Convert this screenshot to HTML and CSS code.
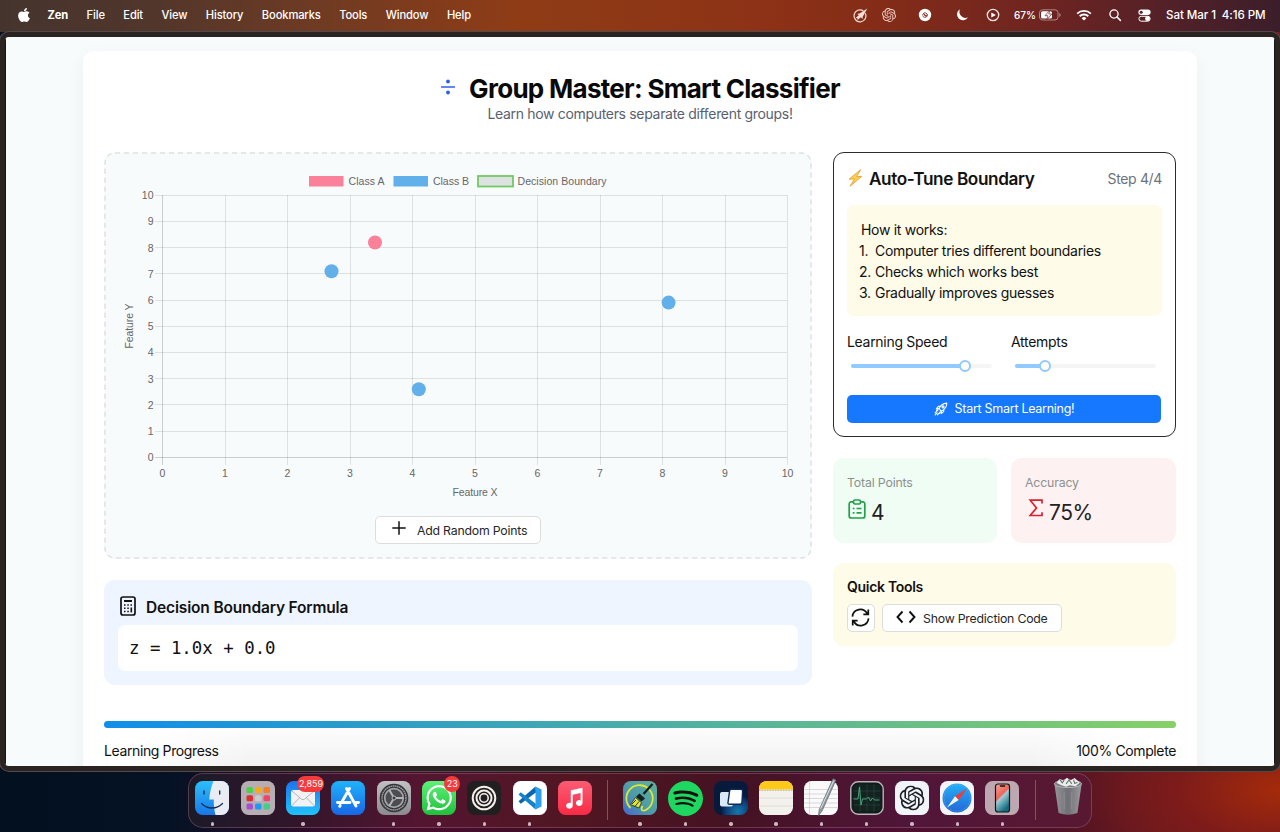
FILE: index.html
```html
<!DOCTYPE html>
<html lang="en">
<head>
<meta charset="utf-8">
<title>Group Master: Smart Classifier</title>
<link rel="stylesheet" href="styles.css">
</head>
<body>
<svg class="defs" width="0" height="0" aria-hidden="true">
  <symbol id="knot" viewBox="0 0 24 24"><path d="M22.2819 9.8211a5.9847 5.9847 0 0 0-.5157-4.9108 6.0462 6.0462 0 0 0-6.5098-2.9A6.0651 6.0651 0 0 0 4.9807 4.1818a5.9847 5.9847 0 0 0-3.9977 2.9 6.0462 6.0462 0 0 0 .7427 7.0966 5.98 5.98 0 0 0 .511 4.9107 6.051 6.051 0 0 0 6.5146 2.9001A5.9847 5.9847 0 0 0 13.2599 24a6.0557 6.0557 0 0 0 5.7718-4.2058 5.9894 5.9894 0 0 0 3.9977-2.9001 6.0557 6.0557 0 0 0-.7475-7.0729zm-9.022 12.6081a4.4755 4.4755 0 0 1-2.8764-1.0408l.1419-.0804 4.7783-2.7582a.7948.7948 0 0 0 .3927-.6813v-6.7369l2.02 1.1686a.071.071 0 0 1 .038.052v5.5826a4.504 4.504 0 0 1-4.4945 4.4944zm-9.6607-4.1254a4.4708 4.4708 0 0 1-.5346-3.0137l.142.0852 4.783 2.7582a.7712.7712 0 0 0 .7806 0l5.8428-3.3685v2.3324a.0804.0804 0 0 1-.0332.0615L9.74 19.9502a4.4992 4.4992 0 0 1-6.1408-1.6464zM2.3408 7.8956a4.485 4.485 0 0 1 2.3655-1.9728V11.6a.7664.7664 0 0 0 .3879.6765l5.8144 3.3543-2.0201 1.1685a.0757.0757 0 0 1-.071 0l-4.8303-2.7865A4.504 4.504 0 0 1 2.3408 7.8956zm16.5963 3.8558L13.1038 8.364 15.1192 7.2a.0757.0757 0 0 1 .071 0l4.8303 2.7913a4.4944 4.4944 0 0 1-.6765 8.1042v-5.6772a.79.79 0 0 0-.407-.667zm2.0107-3.0231l-.142-.0852-4.7735-2.7818a.7759.7759 0 0 0-.7854 0L9.409 9.2297V6.8974a.0662.0662 0 0 1 .0284-.0615l4.8303-2.7866a4.4992 4.4992 0 0 1 6.6802 4.66zM8.3065 12.863l-2.02-1.1638a.0804.0804 0 0 1-.038-.0567V6.0742a4.4992 4.4992 0 0 1 7.3757-3.4537l-.142.0805L8.704 5.459a.7948.7948 0 0 0-.3927.6813zm1.0976-2.3654l2.602-1.4998 2.6069 1.4998v2.9994l-2.5974 1.4997-2.6067-1.4997Z"/></symbol>
</svg>

<header class="menubar">
  <nav class="menus">
    <svg class="apple" viewBox="0 0 384 512"><path fill="#fff" d="M318.7 268.7c-.2-36.7 16.4-64.4 50-84.8-18.8-26.9-47.2-41.7-84.7-44.6-35.5-2.8-74.3 20.7-88.5 20.7-15 0-49.4-19.7-76.4-19.7C63.3 141.2 4 184.8 4 273.5q0 39.3 14.4 81.2c12.8 36.7 59 126.7 107.2 125.2 25.2-.6 43-17.9 75.8-17.9 31.8 0 48.3 17.9 76.4 17.9 48.6-.7 90.4-82.5 102.6-119.3-65.2-30.7-61.7-90-61.7-91.9zm-56.6-164.2c27.3-32.4 24.8-61.9 24-72.5-24.1 1.4-52 16.4-67.9 34.9-17.5 19.8-27.8 44.3-25.6 71.9 26.1 2 49.9-11.4 69.5-34.3z"/></svg>
    <b>Zen</b><span>File</span><span>Edit</span><span>View</span><span>History</span><span>Bookmarks</span><span>Tools</span><span>Window</span><span>Help</span>
  </nav>
  <div class="status">
    <svg class="s-brush" viewBox="0 0 16 16"><path d="M11 3A6.400 6.400 0 1 0 13.200 5.500" fill="none" stroke="#f3dfd9" stroke-width="1.300"/><path d="M15.300.5 10.500 9l-.3 2.600-1.900-1.700L5 12.800 4.600 11 2.900 10.500 6.300 7.600 4.600 6.400l2.800-.8z" fill="#f3dfd9"/></svg>
    <svg class="s-knot" fill="#f0cfc6"><use href="#knot"/></svg>
    <svg class="s-disc" viewBox="0 0 14 14"><circle cx="7" cy="7" r="6.200" fill="#fff"/><path d="M4.700 7.500C4.500 4.500 8.500 4 9 6.200S6 8.500 6.500 6.800M9.500 6.500C9.500 10 5.500 10 5 8M5.500 5.600 8.600 8.500" fill="none" stroke="#71291d" stroke-width=".9"/></svg>
    <svg class="s-moon" viewBox="0 0 14 14"><path d="M5 1.200A5.900 5.900 0 1 0 13 9.300 6.100 6.100 0 0 1 5 1.200z" fill="#fff"/></svg>
    <svg class="s-play" viewBox="0 0 14 14"><circle cx="7" cy="7" r="5.700" fill="none" stroke="#f6e6e3" stroke-width="1.300"/><path d="M5.300 4.400v5.200L9.900 7z" fill="#fff"/></svg>
    <span class="pct">67%</span>
    <svg class="s-batt" viewBox="0 0 22 12"><rect x=".5" y=".8" width="18.500" height="10.200" rx="3" fill="none" stroke="#b08683"/><rect x="2" y="2.300" width="11" height="7.200" rx="1.600" fill="#fff"/><path d="M20.300 4v4q1.400-.5 1.400-2t-1.400-2z" fill="#b08683"/><path d="M11 1 6 6.700h3L7.500 11l5.300-6H9.800z" fill="#fff" stroke="#6d2522" stroke-width=".7"/></svg>
    <svg class="s-wifi" viewBox="0 0 16 12"><g fill="none" stroke="#fff" stroke-width="1.900"><path d="M1.200 4.600a9.800 9.800 0 0 1 13.600 0"/><path d="M3.700 7.300a6.200 6.200 0 0 1 8.600 0"/></g><path d="M8 11.600 5.600 9.200a3.500 3.500 0 0 1 4.800 0z" fill="#fff"/></svg>
    <svg class="s-find" viewBox="0 0 12 12"><circle cx="5" cy="5" r="4.100" fill="none" stroke="#fff" stroke-width="1.300"/><path d="m8 8 3.400 3.400" stroke="#fff" stroke-width="1.500" stroke-linecap="round"/></svg>
    <svg class="s-ctl" viewBox="0 0 13 13"><rect x=".4" y=".6" width="12.200" height="5.400" rx="2.700" fill="#fff"/><circle cx="3.200" cy="3.300" r="1.500" fill="#55222a"/><rect x=".9" y="7.300" width="11.200" height="4.900" rx="2.400" fill="none" stroke="#fff"/><circle cx="9.500" cy="9.700" r="2.400" fill="#fff"/></svg>
    <span class="clock">Sat Mar 1&ensp;4:16 PM</span>
  </div>
</header>

<main class="window">
  <div class="page">
    <section class="app">
      <div class="hero">
        <h1><svg viewBox="0 0 16 16"><path d="M1 8h14" stroke="#2f5fe8" stroke-width="1.700"/><circle cx="8" cy="2.500" r="1.900" fill="#2f5fe8"/><circle cx="8" cy="13.500" r="1.900" fill="#2f5fe8"/></svg><span>Group Master: Smart Classifier</span></h1>
        <p>Learn how computers separate different groups!</p>
      </div>

      <div class="columns">
        <div class="left">
          <div class="plot">
            <svg class="dash"><rect x="1" y="1" width="706" height="405" rx="10"/></svg>
            <svg class="chart" viewBox="118 172 680 330">
              <g class="grid">
                <path d="M225.500 195V465M287.500 195V465M350.500 195V465M412.500 195V465M475.500 195V465M537.500 195V465M600.500 195V465M662.500 195V465M725.500 195V465M787.500 195V465"/>
                <path d="M155 195.500H787M155 221.500H787M155 247.500H787M155 273.500H787M155 300.500H787M155 326.500H787M155 352.500H787M155 378.500H787M155 404.500H787M155 431.500H787"/>
                <path class="axis" d="M162.500 195V465M155 457.500H787"/>
              </g>
              <rect x="309" y="176" width="34.500" height="10.500" fill="#fb819a"/>
              <rect x="393.500" y="176" width="34.500" height="10.500" fill="#62b0ea"/>
              <rect x="478" y="176" width="35" height="10.500" fill="#dfe2e2" stroke="#72c962" stroke-width="1.800"/>
              <text x="348.500" y="184.500" textLength="36">Class A</text>
              <text x="433" y="184.500" textLength="36">Class B</text>
              <text x="517.500" y="184.500" textLength="89">Decision Boundary</text>
              <g text-anchor="end">
                <text x="153.500" y="199">10</text><text x="153.500" y="225">9</text><text x="153.500" y="251.500">8</text><text x="153.500" y="277.500">7</text><text x="153.500" y="304">6</text><text x="153.500" y="330">5</text><text x="153.500" y="356">4</text><text x="153.500" y="382.500">3</text><text x="153.500" y="408.500">2</text><text x="153.500" y="435">1</text><text x="153.500" y="461">0</text>
              </g>
              <g text-anchor="middle">
                <text x="162.500" y="476.500">0</text><text x="225" y="476.500">1</text><text x="287.500" y="476.500">2</text><text x="350" y="476.500">3</text><text x="412.500" y="476.500">4</text><text x="475" y="476.500">5</text><text x="537.500" y="476.500">6</text><text x="600" y="476.500">7</text><text x="662.500" y="476.500">8</text><text x="725" y="476.500">9</text><text x="787.500" y="476.500">10</text>
                <text x="475" y="495.500" textLength="45">Feature X</text>
                <text transform="translate(133 326) rotate(-90)" textLength="45">Feature Y</text>
              </g>
              <circle cx="375" cy="242.500" r="7" fill="#fb819a"/>
              <g fill="#62b0ea"><circle cx="331.500" cy="271.200" r="7"/><circle cx="668.600" cy="302.600" r="7"/><circle cx="418.800" cy="389.200" r="7"/></g>
            </svg>
            <button class="btn add"><svg viewBox="0 0 14 14"><path d="M7 .3v13.400M.3 7h13.400" stroke="#111" stroke-width="1.500"/></svg><span>Add Random Points</span></button>
          </div>

          <div class="formula">
            <h2><svg viewBox="0 0 16 20"><rect x="1" y="1" width="14" height="18" rx="2" fill="none" stroke="#111" stroke-width="1.700"/><path d="M4 5h8" stroke="#111" stroke-width="2"/><path d="M4 9h1.500M7.300 9h1.500M10.500 9H12M4 12.300h1.500M7.300 12.300h1.500M4 15.600h1.500M7.300 15.600h1.500" stroke="#111" stroke-width="1.500"/><path d="M11.300 11.500v4.900" stroke="#111" stroke-width="1.600"/></svg><span>Decision Boundary Formula</span></h2>
            <code>z = 1.0x + 0.0</code>
          </div>
        </div>

        <div class="right">
          <div class="tune">
            <div class="tune-head">
              <h2><svg viewBox="0 0 14 17"><path d="M11.800.7 1 9.600l5.100-.2-4.300 6.900L13 6.900l-5.200.4z" fill="#fcd34d" stroke="#e9a23b" stroke-width=".9" stroke-linejoin="round"/></svg><span>Auto-Tune Boundary</span></h2>
              <span class="step">Step 4/4</span>
            </div>
            <div class="how">
              <p>How it works:</p>
              <ol><li><i>1.</i><span>Computer tries different boundaries</span></li><li><i>2.</i><span>Checks which works best</span></li><li><i>3.</i><span>Gradually improves guesses</span></li></ol>
            </div>
            <div class="sliders">
              <div><label>Learning Speed</label><div class="track"><div class="fill" style="width:81%"></div><div class="knob"></div></div></div>
              <div><label>Attempts</label><div class="track"><div class="fill" style="width:21%"></div><div class="knob"></div></div></div>
            </div>
            <button class="primary"><svg viewBox="0 0 24 24" fill="none" stroke="#fff" stroke-width="1.900" stroke-linecap="round" stroke-linejoin="round"><path d="M8.500 11.500C11 5.500 15 2.500 22 2c-.5 7-3.500 11-9.500 13.500z"/><circle cx="15.500" cy="8.500" r="1.800"/><path d="M8.500 11.500 4 11.700 7.500 7.500l3-.3M12.500 15.500l-.2 4.500 4.200-3.500.3-3M7 13.500c-2 .2-3 1-3.200 3M10.500 17c-.2 2-1 3-3 3.200M5.500 18.500 2 22M5.500 14.800 2 18.500M9.200 18.500 6 22"/></svg><span>Start Smart Learning!</span></button>
          </div>

          <div class="stats">
            <div class="stat green"><small>Total Points</small><div><svg width="18" height="20" viewBox="0 0 18 20" fill="none" stroke="#22a04a" stroke-width="1.700"><path d="M5.500 2.900H3.200A2 2 0 0 0 1.200 5v12a2 2 0 0 0 2 2h11.600a2 2 0 0 0 2-2V5a2 2 0 0 0-2-2.100h-2.300"/><rect x="5.500" y="1" width="7" height="4" rx="1.500"/><path d="M4.700 9.500h1.800M8.500 9.500h5M4.700 13.800h1.800M8.500 13.800h5"/></svg><strong>4</strong></div></div>
            <div class="stat red"><small>Accuracy</small><div><svg width="16" height="18" viewBox="0 0 16 18" fill="none" stroke="#d9202f" stroke-width="1.700"><path d="M14 4.500V1.200H2.200L8.500 9l-6.300 7.500H14v-3.200"/></svg><strong>75%</strong></div></div>
          </div>

          <div class="tools">
            <h3>Quick Tools</h3>
            <div class="tool-row">
              <button class="btn icon"><svg viewBox="0 0 20 20" fill="none" stroke="#111" stroke-width="1.800"><path d="M1.500 9A8.300 8.300 0 0 1 17 5.800M18.200 1.500V6.800H13M18.500 11A8.300 8.300 0 0 1 3 14.200M1.800 18.500v-5.300H7"/></svg></button>
              <button class="btn code"><svg viewBox="0 0 20 14" fill="none" stroke="#111" stroke-width="1.900"><path d="M6.500 1.500 1.500 7l5 5.500M13.500 1.500l5 5.500-5 5.500"/></svg><span>Show Prediction Code</span></button>
            </div>
          </div>
        </div>
      </div>

      <div class="bar"></div>
      <div class="bar-labels"><span>Learning Progress</span><span>100% Complete</span></div>
    </section>
    <div class="shade"></div>
  </div>
</main>

<footer class="dock">
  <div class="slot on"><svg viewBox="0 0 34 34"><defs><linearGradient id="fb" x2="0" y2="1"><stop stop-color="#2cc0fb"/><stop offset="1" stop-color="#1877e8"/></linearGradient><clipPath id="r"><rect width="34" height="34" rx="7.700"/></clipPath></defs><g clip-path="url(#r)"><path fill="url(#fb)" d="M0 0h34v34H0z"/><path fill="#e9edf3" d="M18.500 0C16 6 14.500 13 14.300 18.500h4.500c-.2 6 .5 11 1.700 15.500H34V0z"/><path d="M9 10v3M24.700 10v3" stroke="#17304f" stroke-width="1.400" stroke-linecap="round"/><path d="M6.500 22.500c6 6 15 6 21 0" fill="none" stroke="#17304f" stroke-width="1.300" stroke-linecap="round"/></g></svg></div>
  <div class="slot"><svg viewBox="0 0 34 34"><rect width="34" height="34" rx="7.700" fill="#b7aeb5"/><rect x="5.500" y="6" width="6.500" height="6" rx="1.500" fill="#4bd04c"/><rect x="14" y="6" width="6.500" height="6" rx="1.500" fill="#f8a915"/><rect x="22.500" y="6" width="6.500" height="6" rx="1.500" fill="#f27f21"/><rect x="5.500" y="14.200" width="6.500" height="6" rx="1.500" fill="#dc2e31"/><rect x="14" y="14.200" width="6.500" height="6" rx="1.500" fill="#c9c9ce"/><rect x="22.500" y="14.200" width="6.500" height="6" rx="1.500" fill="#f24468"/><rect x="5.500" y="22.400" width="6.500" height="6" rx="1.500" fill="#a650cf"/><rect x="14" y="22.400" width="6.500" height="6" rx="1.500" fill="#1c9bf2"/><rect x="22.500" y="22.400" width="6.500" height="6" rx="1.500" fill="#43cf84"/></svg></div>
  <div class="slot on"><svg viewBox="0 0 34 34"><defs><linearGradient id="ml" x2="0" y2="1"><stop stop-color="#1d73ee"/><stop offset="1" stop-color="#20c3fb"/></linearGradient></defs><rect width="34" height="34" rx="7.700" fill="url(#ml)"/><rect x="5" y="9" width="24" height="16.500" rx="2.500" fill="#f1f2f4"/><path d="m6 10 9.500 8.200q1.500 1.200 3 0L28 10M6 24.500l7.500-7.700M28 24.500l-7.500-7.700" fill="none" stroke="#aaadb2" stroke-width=".9"/></svg><span class="badge wide">2,859</span></div>
  <div class="slot"><svg viewBox="0 0 34 34"><defs><linearGradient id="as" x2="0" y2="1"><stop stop-color="#1fb3fa"/><stop offset="1" stop-color="#1867e6"/></linearGradient></defs><rect width="34" height="34" rx="7.700" fill="url(#as)"/><g stroke="#fff" stroke-width="2.900" stroke-linecap="round"><path d="M18.500 7.500 10.700 21.200M15.500 7.500 25 25M6.500 21.500h12.500M24 21.500h3.500M9.200 24.300l-.5 1"/></g></svg></div>
  <div class="slot on"><svg viewBox="0 0 34 34"><defs><linearGradient id="sg" x2="0" y2="1"><stop stop-color="#c2c2c5"/><stop offset="1" stop-color="#8a8a8f"/></linearGradient></defs><rect width="34" height="34" rx="7.700" fill="url(#sg)"/><circle cx="17" cy="17" r="14.300" fill="#35363a"/><circle cx="17" cy="17" r="12" fill="none" stroke="#a0a0a3" stroke-width="1.400" stroke-dasharray="1.600 .5"/><circle cx="17" cy="17" r="9.300" fill="#4c4d51" stroke="#a5a5a8" stroke-width="1.700"/><path d="M17 17h9M17 17l-4.500-7.800M17 17l-4.500 7.800" stroke="#b5b5b8" stroke-width="2"/><circle cx="17" cy="17" r="2" fill="#3a3b3e" stroke="#b5b5b8"/></svg></div>
  <div class="slot on"><svg viewBox="0 0 34 34"><defs><linearGradient id="wa" x2="0" y2="1"><stop stop-color="#5df277"/><stop offset="1" stop-color="#1fc03c"/></linearGradient></defs><rect width="34" height="34" rx="7.700" fill="url(#wa)"/><path transform="translate(4.500 2.300) scale(.0565)" fill="#fff" d="M380.900 97.100C339 55.100 283.200 32 223.900 32c-122.400 0-222 99.600-222 222 0 39.100 10.200 77.300 29.600 111L0 480l117.700-30.900c32.400 17.700 68.900 27 106.100 27h.1c122.300 0 224.100-99.600 224.100-222 0-59.300-25.200-115-67.100-157zm-157 341.600c-33.200 0-65.700-8.900-94-25.700l-6.700-4-69.800 18.300L72 359.200l-4.400-7c-18.500-29.400-28.200-63.300-28.200-98.200 0-101.700 82.800-184.500 184.600-184.500 49.300 0 95.600 19.200 130.400 54.100 34.800 34.900 56.200 81.200 56.100 130.500 0 101.800-84.900 184.600-186.600 184.600zm101.200-138.200c-5.500-2.800-32.800-16.200-37.900-18-5.100-1.900-8.800-2.800-12.500 2.800-3.700 5.600-14.300 18-17.600 21.800-3.200 3.700-6.500 4.200-12 1.400-32.600-16.300-54-29.100-75.500-66-5.700-9.800 5.700-9.100 16.300-30.300 1.800-3.700.9-6.900-.5-9.700-1.400-2.800-12.500-30.100-17.100-41.200-4.500-10.800-9.100-9.300-12.500-9.500-3.200-.2-6.900-.2-10.600-.2-3.700 0-9.700 1.400-14.800 6.900-5.100 5.600-19.400 19-19.400 46.300 0 27.300 19.900 53.700 22.600 57.400 2.800 3.700 39.100 59.700 94.800 83.800 35.200 15.200 49 16.500 66.600 13.900 10.700-1.600 32.800-13.400 37.400-26.400 4.600-13 4.600-24.100 3.200-26.400-1.300-2.500-5-3.900-10.500-6.600z"/></svg><span class="badge">23</span></div>
  <div class="slot on"><svg viewBox="0 0 34 34"><rect width="34" height="34" rx="7.700" fill="#211f20"/><g fill="none" stroke="#f4efea" stroke-width="2"><circle cx="17" cy="17" r="11.300"/><circle cx="17" cy="17" r="7.500"/><circle cx="17" cy="17" r="4.200" stroke-width="1.600"/></g></svg></div>
  <div class="slot on"><svg viewBox="0 0 34 34"><rect width="34" height="34" rx="7.700" fill="#fff"/><path d="M22.500 5.500 28.500 8.500v17l-6 3z" fill="#2c9ff0"/><path d="M22.500 5.500 5.500 20.300l2.300 2.500 15-11.300z" fill="#0b67b2"/><path d="m22.500 28.500-17-15 2.300-2.300 15 11.500z" fill="#1583cc"/></svg></div>
  <div class="slot"><svg viewBox="0 0 34 34"><defs><linearGradient id="mu" x2="0" y2="1"><stop stop-color="#fb5c74"/><stop offset="1" stop-color="#fa2a45"/></linearGradient></defs><rect width="34" height="34" rx="7.700" fill="url(#mu)"/><path d="M12.800 9.200 24.500 6.700v15.500a3.300 2.900 0 1 1-1.900-2.800V12l-7.900 1.700v11.200a3.300 2.900 0 1 1-1.900-2.800z" fill="#fff"/></svg></div>
  <div class="rule"></div>
  <div class="slot on"><svg viewBox="0 0 34 34"><defs><linearGradient id="bl" x1="1" x2="0" y2="1"><stop stop-color="#62b398"/><stop offset=".55" stop-color="#4e9ba8"/><stop offset="1" stop-color="#4466d0"/></linearGradient></defs><rect width="34" height="34" rx="7.700" fill="url(#bl)"/><path d="M7.500 27A13.200 13.200 0 1 1 24 28.300C20 31 17 29.500 19.500 25" fill="none" stroke="#dce63b" stroke-width="1.800"/><path d="M29.500 3 20.500 13" stroke="#15201b" stroke-width="2.200"/><path d="m16.500 12.500 5.500 5-3.500 3-5.500-4.700z" fill="#15201b"/><path d="m12.500 16.500 6 5.200-2.500 5.300-8.500-3.500z" fill="#dfe43a" stroke="#222b18" stroke-width=".8"/><path d="m13 19-4 4M16 20.500l-4 5" stroke="#222b18" stroke-width=".9"/></svg></div>
  <div class="slot on"><svg class="full" viewBox="0 0 24 24"><circle cx="12" cy="12" r="11" fill="#111"/><path fill="#1ed760" d="M12 0C5.400 0 0 5.400 0 12s5.400 12 12 12 12-5.400 12-12S18.660 0 12 0zm5.521 17.340c-.24.359-.66.48-1.021.24-2.820-1.740-6.360-2.101-10.561-1.141-.418.122-.779-.179-.899-.539-.12-.421.18-.78.54-.9 4.560-1.021 8.520-.6 11.640 1.320.42.18.479.659.301 1.020zm1.440-3.300c-.301.42-.841.6-1.262.3-3.239-1.980-8.159-2.580-11.939-1.380-.479.12-1.020-.12-1.140-.6-.12-.48.12-1.021.6-1.141C9.600 9.900 15 10.561 18.720 12.840c.361.181.54.78.241 1.200zm.12-3.360C15.240 8.400 8.820 8.160 5.160 9.301c-.6.179-1.200-.181-1.380-.721-.18-.601.18-1.200.72-1.381 4.260-1.260 11.280-1.020 15.721 1.621.539.3.719 1.020.419 1.560-.299.421-1.020.599-1.559.3z"/></svg></div>
  <div class="slot on"><svg viewBox="0 0 34 34"><defs><radialGradient id="wn" cx=".7" cy=".9"><stop stop-color="#1579ad"/><stop offset=".7" stop-color="#0c3e77"/><stop offset="1" stop-color="#071a3c"/></radialGradient></defs><rect width="34" height="34" rx="7.700" fill="url(#wn)"/><rect x="6" y="11" width="13" height="14.500" rx="2" fill="#dbe8f7"/><path d="M17.200 8.300h9.500q2 0 1.900 2l-.6 11q-.1 2-2 2H15.400q-1.700 0-1.400-1.700l1.600-11.700q.2-1.600 1.600-1.600z" fill="#fff" stroke="#0a2a57" stroke-width="1.400"/></svg></div>
  <div class="slot on"><svg viewBox="0 0 34 34"><g clip-path="url(#r)"><path fill="#f3f1ec" d="M0 0h34v34H0z"/><path fill="#fdca1c" d="M0 0h34v8.500H0z"/><path d="M0 9.300h34" stroke="#b09e70" stroke-dasharray=".8 .8"/><path d="M0 17h34M0 25h34" stroke="#dbd8d2" stroke-width=".8"/></g></svg></div>
  <div class="slot on"><svg viewBox="0 0 34 34"><rect width="34" height="34" rx="7.700" fill="#fafafa"/><path d="M0 8.500h34M0 13h34M0 17.500h34M0 22h34M0 26.500h34" stroke="#cfcfd4" stroke-width=".8"/><path d="M5.500 0v34" stroke="#f0b5b5" stroke-width=".6"/><path d="m29-2.300 3 1.300-14 31-3.500 4.500.7-5.800z" fill="#929ba2" stroke="#59636b" stroke-width=".7"/><path d="m29.700-.5-13 28" stroke="#dce2e6" stroke-width="1"/></svg></div>
  <div class="slot on"><svg viewBox="0 0 34 34"><rect x=".8" y=".8" width="32.400" height="32.400" rx="7.200" fill="#111b19" stroke="#b9b4b9" stroke-width="1.400"/><rect x="3.500" y="3.500" width="27" height="27" rx="4" fill="#122320"/><path d="M3.500 10h27M3.500 17h27M3.500 24h27M10 3.500v27M17 3.500v27M24 3.500v27" stroke="#2b493f" stroke-width=".6"/><path d="M3.500 18H8l1.500-12 1.500 18 1.500-6h4l2-2 2 4 2-3 2 2h5" fill="none" stroke="#56ab86" stroke-width=".9"/></svg></div>
  <div class="slot on"><svg viewBox="0 0 34 34"><rect width="34" height="34" rx="7.700" fill="#f1f4f8"/><use href="#knot" x="4.500" y="4.500" width="25" height="25" fill="#1d1f22"/></svg></div>
  <div class="slot on"><svg viewBox="0 0 34 34"><defs><linearGradient id="sf" x2="0" y2="1"><stop stop-color="#26aef5"/><stop offset="1" stop-color="#2168d8"/></linearGradient></defs><rect width="34" height="34" rx="7.700" fill="#f5f5f7"/><circle cx="17" cy="17" r="14.500" fill="url(#sf)"/><circle cx="17" cy="17" r="13" fill="none" stroke="#8fc6f3" stroke-width="1" stroke-dasharray=".4 1.300"/><path d="M27 7.500 18.700 19 15 15.200z" fill="#f13c36"/><path d="m7 26.500 8-11.300 3.700 3.800z" fill="#f4f4f4"/></svg></div>
  <div class="slot on"><svg viewBox="0 0 34 34"><defs><linearGradient id="ph" x2=".5" y2="1"><stop stop-color="#f2a59a"/><stop offset=".48" stop-color="#ed6558"/><stop offset=".55" stop-color="#a3cdd4"/><stop offset="1" stop-color="#126d80"/></linearGradient></defs><rect width="34" height="34" rx="7.700" fill="#bda7b1"/><rect x="10.500" y="3" width="14" height="28" rx="2.500" fill="url(#ph)" stroke="#151515" stroke-width="1.200"/><path d="M15.500 5h4" stroke="#111" stroke-width="1.500" stroke-linecap="round"/></svg></div>
  <div class="rule"></div>
  <div class="slot"><svg class="trash" viewBox="0 0 34 42"><defs><linearGradient id="tr"><stop stop-color="#999c9f"/><stop offset=".5" stop-color="#707479"/><stop offset="1" stop-color="#a0a2a4"/></linearGradient></defs><path d="M2.500 7 7 38q10 3.500 20 0l4.500-31z" fill="url(#tr)" opacity=".95"/><ellipse cx="17" cy="7" rx="14.500" ry="4" fill="#777b7f" stroke="#c4c6c8" stroke-width=".8"/><path d="m5 6 3-4.500 4 2 4-3 3.500 3L24 .8l5.500 5L25 9.500l-6-1-4 1.500-5-1.500z" fill="#eceeee"/><path d="m8 2 3 4 2-3M15 7l3-4 3 4M23 2.500l1 4 3-1" fill="none" stroke="#5c7068" stroke-width="1.100"/><path d="M13 16v18M21 16v18" stroke="#bcbfc1" stroke-width=".5" opacity=".6"/></svg></div>
</footer>
</body>
</html>
```
FILE: styles.css
```css
* { box-sizing: border-box; }
body {
  margin: 0;
  width: 1280px;
  height: 832px;
  overflow: hidden;
  display: flex;
  flex-direction: column;
  font-family: Inter, "Liberation Sans", sans-serif;
  font-size: 14px;
  letter-spacing: -.3px;
  color: #111;
  background:
    radial-gradient(ellipse 230px 120px at 1280px 790px, #a52b0a, #7d1b1a 45%, transparent),
    linear-gradient(90deg, #02101f 0, #051225 170px, #240c27 270px, #480e2e 400px, #3a0b20 640px, #4c0e35 830px, #500f2a 1000px, #4f1424 1100px, #7d1e1b 1280px);
}
h1, h2, h3, p, ol { margin: 0; padding: 0; font-weight: inherit; }
svg { display: block; flex: none; overflow: visible; }
button { font: inherit; cursor: pointer; }
.defs { display: none; }

.menubar {
  height: 32px;
  flex: none;
  padding: 0 14px 2px 18px;
  display: flex;
  justify-content: space-between;
  align-items: center;
  color: #fff;
  font-size: 11.200px;
  font-weight: 500;
  letter-spacing: -.15px;
  white-space: nowrap;
  background: linear-gradient(90deg, #45342e 0, #51362b 150px, #713b22 330px, #8f3c16 520px, #8d3216 760px, #842c18 880px, #6d2421 1050px, #4e2029 1190px, #3b1e2a 1280px);
}
.menus { display: flex; align-items: center; gap: 18.500px; }
.menus b { font-weight: 700; margin-left: -1px; }
.apple { width: 12px; height: 16px; }
.status { display: flex; align-items: center; }
.s-brush { width: 15px; height: 15px; margin-right: 14px; }
.s-knot { width: 14px; height: 14px; margin-right: 22px; }
.s-disc { width: 14px; height: 14px; margin-right: 23px; }
.s-moon { width: 14px; height: 14px; margin-right: 16.500px; }
.s-play { width: 14px; height: 14px; margin-right: 14.500px; }
.pct { width: 21px; margin-right: 4px; font-size: 10px; letter-spacing: 0; }
.s-batt { width: 22px; height: 12px; margin-right: 15px; }
.s-wifi { width: 16px; height: 12px; margin-right: 17px; }
.s-find { width: 12px; height: 12px; margin-right: 17px; }
.s-ctl { width: 13px; height: 13px; margin-right: 15px; }
.clock { width: 100px; font-size: 11.600px; letter-spacing: -.07px; }

.window {
  height: 739px;
  flex: none;
  border: 5px solid #292322;
  border-radius: 9px;
  box-shadow: inset 0 0 0 1px #161313, 0 0 0 1px #55484a;
  background: #fff;
  overflow: hidden;
}
.page {
  position: relative;
  height: 729px;
  margin: 0 1px;
  padding: 14px 77px 0;
  background: #f8fbfc;
  overflow: hidden;
}
.app {
  height: 760px;
  padding: 21px;
  border-radius: 11px;
  background: #fff;
  box-shadow: 0 6px 18px rgba(0, 0, 0, .05);
}
.shade {
  position: absolute;
  inset: auto 120px 0;
  height: 46px;
  background: linear-gradient(transparent, rgba(0, 0, 0, .055));
  -webkit-mask: linear-gradient(90deg, transparent, #000 12%, #000 88%, transparent);
}

.hero { height: 80px; text-align: center; }
.hero h1 {
  display: flex;
  justify-content: center;
  align-items: center;
  gap: 13px;
  height: 32px;
  font-size: 26px;
  font-weight: 700;
  letter-spacing: -.71px;
  color: #090909;
}
.hero h1 svg { width: 16px; height: 16px; margin-top: -2px; }
.hero p { line-height: 20px; letter-spacing: -.32px; color: #596170; }

.columns { display: grid; grid-template-columns: 708px 343px; gap: 21px; }
.left, .right { display: flex; flex-direction: column; gap: 21px; }

.plot {
  position: relative;
  height: 407px;
  padding: 20px 14px 0;
  border-radius: 11px;
  background: #f8fbfc;
  display: flex;
  flex-direction: column;
  align-items: center;
  gap: 14px;
}
.dash { position: absolute; inset: 0; width: 708px; height: 407px; }
.dash rect { fill: none; stroke: #dfe1e4; stroke-width: 1.500px; stroke-dasharray: 5 4; }
.chart { width: 680px; height: 330px; }
.chart text { font: 10.500px "Liberation Sans", Arial, sans-serif; letter-spacing: 0; fill: #666; }
.grid path { stroke: #000; stroke-opacity: .1; stroke-width: 1px; fill: none; }
.grid .axis { stroke-opacity: .18; }

.btn {
  display: flex;
  flex: none;
  align-items: center;
  height: 28px;
  border: 1px solid #dcdcdc;
  border-radius: 5px;
  background: #fff;
  color: #262626;
  font-size: 12.300px;
  letter-spacing: -.22px;
  padding: 0;
}
.add { width: 166px; padding-left: 16px; gap: 11px; }
.add svg { width: 14px; height: 14px; margin-top: -4px; }

.formula { height: 105px; padding: 14px; border-radius: 11px; background: #eef5ff; }
.formula h2 { display: flex; align-items: center; gap: 10px; height: 24px; margin-bottom: 7px; padding-left: 2px; font-size: 15.500px; font-weight: 600; letter-spacing: -.16px; }
.formula h2 svg { width: 16px; height: 20px; }
.formula h2 span { padding-top: 2px; }
.formula code {
  display: block;
  height: 46px;
  padding-left: 11px;
  border-radius: 7px;
  background: #fff;
  font: 17.400px/47px "DejaVu Sans Mono", monospace;
  letter-spacing: 0;
}

.tune { height: 285px; padding: 13px; border: 1px solid #2b2b2b; border-radius: 11px; }
.tune-head { display: flex; justify-content: space-between; align-items: center; height: 25px; margin-bottom: 14px; }
.tune-head h2 { display: flex; align-items: center; gap: 6px; padding-left: 1px; font-size: 17.200px; font-weight: 600; letter-spacing: -.38px; }
.tune-head svg { width: 15px; height: 18px; margin-top: -1px; }
.step { color: #6b7280; letter-spacing: -.35px; }
.how { height: 111px; padding: 13.500px 14px; border-radius: 7px; background: #fefbe8; line-height: 21px; }
.how ol { list-style: none; margin-left: -2px; }
.how li { display: flex; gap: 4px; }
.how li i { font-style: normal; width: 12px; }
.sliders { display: grid; grid-template-columns: 150px 150px; gap: 14px; height: 79px; padding-top: 14.500px; line-height: 21px; }
.track { display: flex; align-items: center; height: 4px; margin: 12px 5px 0 4px; background: #f5f5f5; border-radius: 2px; }
.fill { height: 4px; border-radius: 2px; background: #91caff; }
.knob { width: 12px; height: 12px; flex: none; margin-left: -6px; border: 2px solid #91caff; border-radius: 50%; background: #fff; }
.primary {
  width: 314px;
  height: 28px;
  margin-top: -.5px;
  display: flex;
  justify-content: center;
  align-items: center;
  gap: 7px;
  border: 0;
  border-radius: 5px;
  background: #1677ff;
  color: #fff;
  font-size: 12.500px;
  letter-spacing: -.28px;
}
.primary svg { width: 14px; height: 14px; }

.stats { display: grid; grid-template-columns: 164px 165px; gap: 14px; height: 84px; }
.stat { padding: 14px; border-radius: 11px; }
.stat small { display: block; height: 24px; line-height: 21px; font-size: 12.300px; letter-spacing: -.16px; color: #8b918e; }
.stat div { display: flex; align-items: flex-start; gap: 5px; padding-left: 2px; }
.stat div svg { margin-top: 3px; }
.stat strong { font-weight: 400; font-size: 21px; line-height: 33px; color: #222; letter-spacing: -.5px; }
.green { background: #effdf4; }
.green div svg { margin-left: -1px; }
.red { background: #fef1f2; }
.red div { padding-left: 3px; }

.tools { height: 83px; padding: 14px; border-radius: 11px; background: #fefbe8; }
.tools h3 { height: 27px; line-height: 20px; font-size: 14px; font-weight: 600; }
.tool-row { display: flex; gap: 7px; }
.icon { width: 28px; justify-content: center; }
.icon svg { width: 19px; height: 19px; margin: -2px 0 0 -1px; }
.code { width: 180px; padding-left: 13px; gap: 7px; }
.code svg { width: 20px; height: 14px; margin-top: -3px; }

.bar { height: 7px; margin-top: 36px; border-radius: 4px; background: linear-gradient(90deg, #108ee9, #87d068); }
.bar-labels { display: flex; justify-content: space-between; margin-top: 13px; line-height: 20px; letter-spacing: -.38px; }

.dock {
  width: 904px;
  height: 55px;
  margin: 2px auto 0 188px;
  padding: 0 0 0 1.800px;
  display: flex;
  border-radius: 15px;
  box-shadow: inset 0 0 0 1px rgba(180, 130, 145, .35);
  background: linear-gradient(90deg, #1b1a29, #33152a 110px, #541531 230px, #511622 380px, #441223 550px, #501639 720px, #591831 900px);
}
.slot { position: relative; width: 45.300px; flex: none; display: flex; justify-content: center; padding-top: 8px; }
.slot > svg { width: 34px; height: 34px; }
.slot > svg.full { width: 35px; height: 35px; }
.slot > svg.trash { width: 32px; height: 40px; margin-top: -4px; }
.on::after { content: ""; position: absolute; top: 49px; left: 21px; width: 3.500px; height: 3.500px; border-radius: 50%; background: #cfb5c2; }
.rule { width: 20px; flex: none; display: flex; justify-content: center; padding-top: 7px; }
.rule::before { content: ""; width: 1px; height: 40px; background: #805266; }
.badge {
  position: absolute;
  top: 3px;
  left: 28px;
  min-width: 16px;
  height: 16px;
  border-radius: 8px;
  background: #f43b3b;
  color: #fff;
  font-size: 9px;
  line-height: 16px;
  letter-spacing: -.1px;
  text-align: center;
}
.badge.wide { left: 17px; width: 27px; }
```
